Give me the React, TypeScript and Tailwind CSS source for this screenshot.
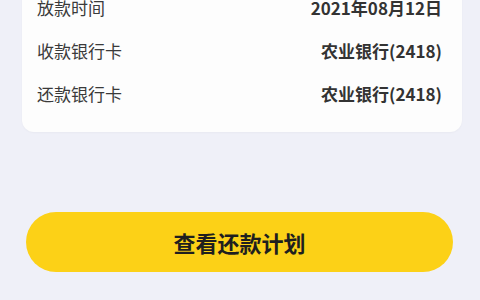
import React from 'react';

const rows = [
  { label: '放款时间', value: '2021年08月12日' },
  { label: '收款银行卡', value: '农业银行(2418)' },
  { label: '还款银行卡', value: '农业银行(2418)' },
];

export default function App() {
  return (
    <div
      className="h-[300px] w-[480px] overflow-hidden bg-[#eff0f8]"
      style={{ fontFamily: '"Noto Sans CJK SC", "Noto Sans", sans-serif' }}
    >
      {/* detail card */}
      <div className="mx-[22px] -mt-[14px] w-[440px] rounded-b-[12px] bg-[#fdfdfd] pb-[17px] shadow-[0_1px_2px_rgba(0,0,0,0.03)]">
        {rows.map((row) => (
          <div key={row.label} className="flex h-[43px] items-center justify-between pl-[15px] pr-[20px]">
            <span className="text-[17px] leading-none text-[#3a3a3a]">{row.label}</span>
            <span className="text-[17px] font-bold leading-none text-[#333]">{row.value}</span>
          </div>
        ))}
      </div>

      <button className="mx-[26px] mt-[80px] flex h-[60px] w-[427px] items-center justify-center rounded-full bg-[#fcd117] text-[22px] font-bold text-[#1f1f1f]">
        查看还款计划
      </button>
    </div>
  );
}
